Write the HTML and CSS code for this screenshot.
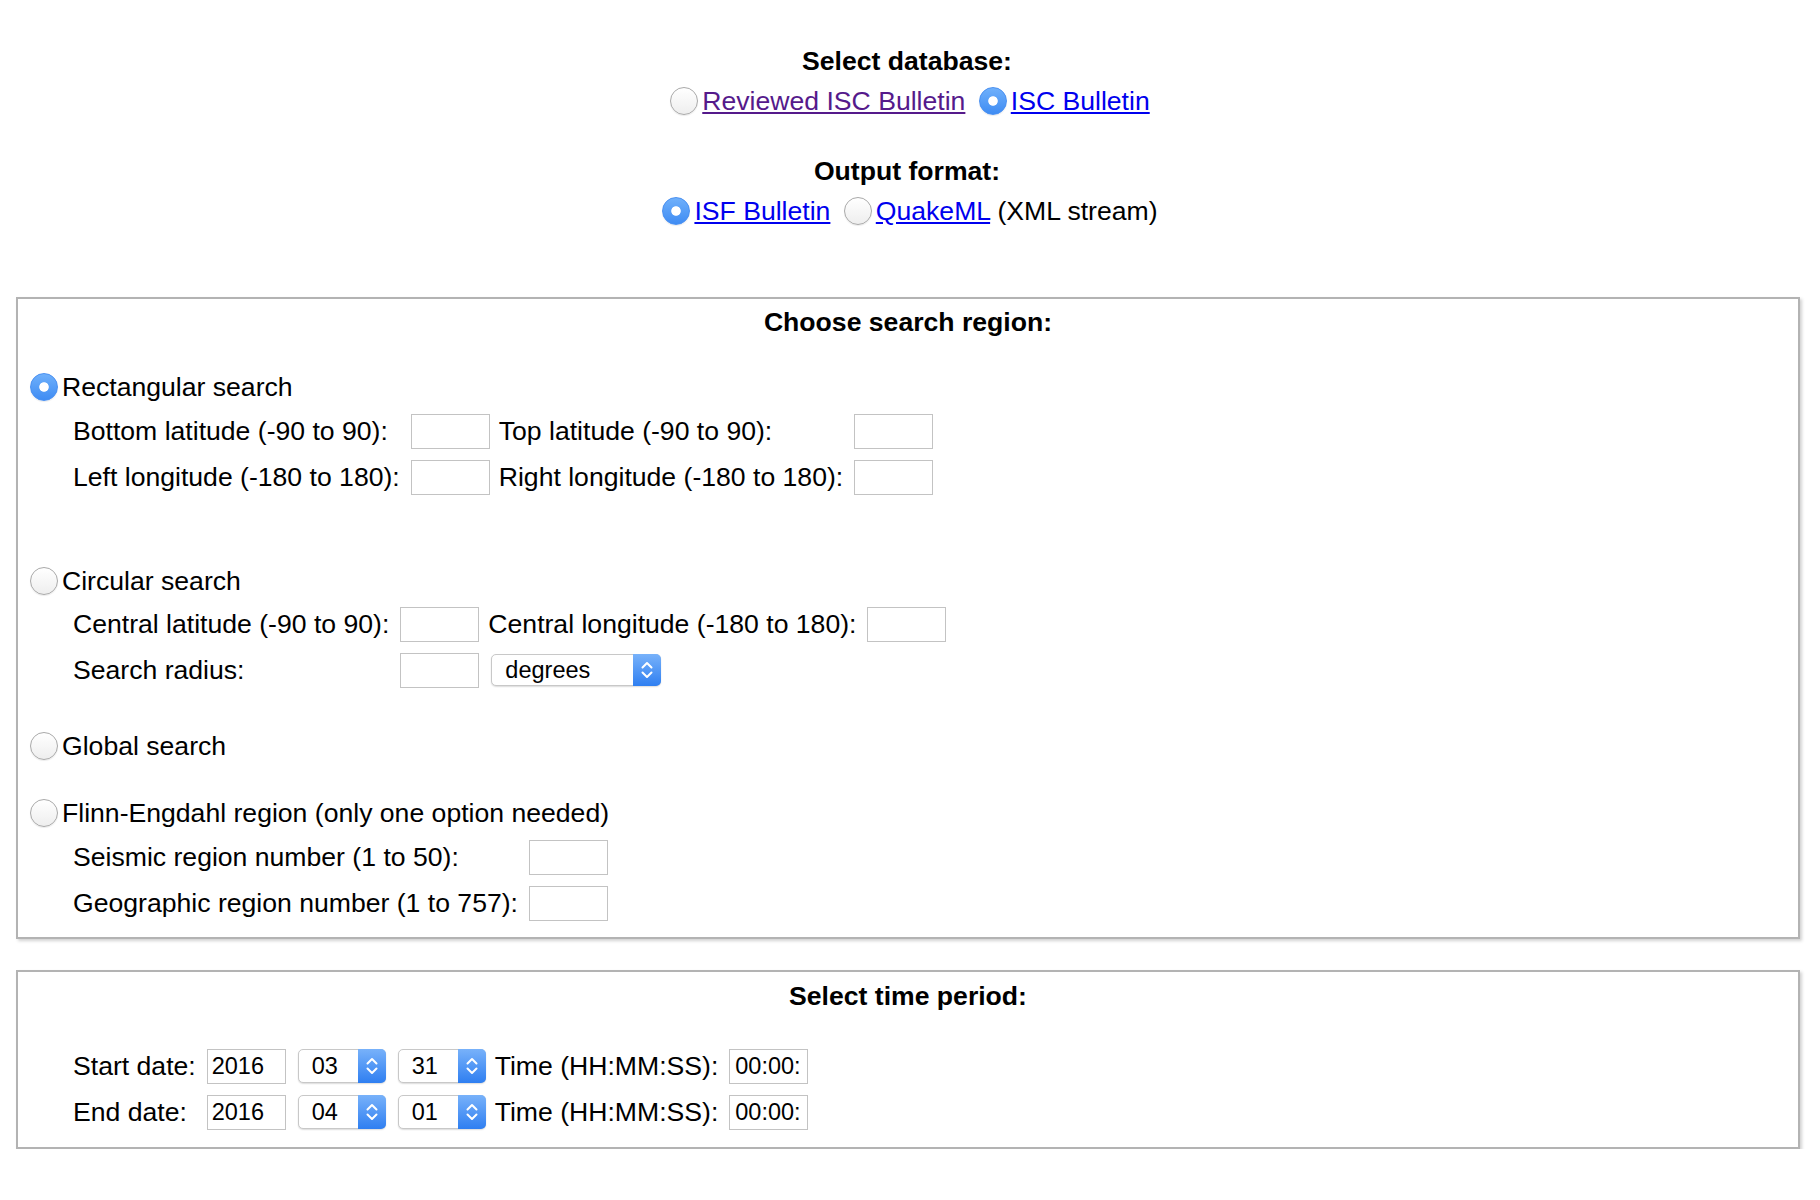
FILE: index.html
```html
<!DOCTYPE html>
<html lang="en">
<head>
<meta charset="utf-8">
<title>ISC Bulletin search</title>
<link rel="stylesheet" href="styles.css">
</head>
<body>
<div class="top">
  <div class="heading">Select database:</div>
  <div class="choices"><input type="radio" class="radio" name="db"><a href="#" class="link visited">Reviewed ISC Bulletin</a> <input type="radio" class="radio" name="db" checked><a href="#" class="link">ISC Bulletin</a></div>
  <div class="heading heading-gap">Output format:</div>
  <div class="choices"><input type="radio" class="radio" name="fmt" checked><a href="#" class="link">ISF Bulletin</a> <input type="radio" class="radio" name="fmt"><a href="#" class="link">QuakeML</a> (XML stream)</div>
</div>

<div class="box box-region">
  <div class="box-title">Choose search region:</div>

  <div class="opt opt-rect"><input type="radio" class="radio" name="region" checked>Rectangular search</div>
  <table class="grid grid-shift">
    <tr>
      <td class="lab">Bottom latitude (-90 to 90):</td>
      <td class="inp"><input type="text" class="field"></td>
      <td class="lab">Top latitude (-90 to 90):</td>
      <td class="inp"><input type="text" class="field"></td>
    </tr>
    <tr>
      <td class="lab">Left longitude (-180 to 180):</td>
      <td class="inp"><input type="text" class="field"></td>
      <td class="lab">Right longitude (-180 to 180):</td>
      <td class="inp"><input type="text" class="field"></td>
    </tr>
  </table>

  <div class="opt opt-circ"><input type="radio" class="radio" name="region">Circular search</div>
  <table class="grid">
    <tr>
      <td class="lab">Central latitude (-90 to 90):</td>
      <td class="inp"><input type="text" class="field"></td>
      <td class="lab">Central longitude (-180 to 180):</td>
      <td class="inp"><input type="text" class="field"></td>
    </tr>
    <tr>
      <td class="lab">Search radius:</td>
      <td class="inp"><input type="text" class="field"></td>
      <td class="inp" colspan="2">
        <span class="select select-wide"><select class="select-input"><option>degrees</option><option>km</option></select><span class="select-arrow"><svg viewBox="0 0 14 24" width="14" height="24"><path d="M2.5 9.5 L7 5 L11.5 9.5 M2.5 14.5 L7 19 L11.5 14.5" fill="none" stroke="#fff" stroke-width="2" stroke-linecap="round" stroke-linejoin="round"/></svg></span></span>
      </td>
    </tr>
  </table>

  <div class="opt opt-global"><input type="radio" class="radio" name="region">Global search</div>

  <div class="opt opt-flinn"><input type="radio" class="radio" name="region">Flinn-Engdahl region (only one option needed)</div>
  <table class="grid grid-shift">
    <tr>
      <td class="lab">Seismic region number (1 to 50):</td>
      <td class="inp"><input type="text" class="field"></td>
    </tr>
    <tr>
      <td class="lab">Geographic region number (1 to 757):</td>
      <td class="inp"><input type="text" class="field"></td>
    </tr>
  </table>
</div>

<div class="box box-time">
  <div class="box-title box-title-time">Select time period:</div>
  <table class="grid grid-time">
    <tr>
      <td class="lab">Start date:</td>
      <td class="inp"><input type="text" class="field" value="2016"></td>
      <td class="inp"><span class="select select-date"><select class="select-input"><option>03</option></select><span class="select-arrow"><svg viewBox="0 0 14 24" width="14" height="24"><path d="M2.5 9.5 L7 5 L11.5 9.5 M2.5 14.5 L7 19 L11.5 14.5" fill="none" stroke="#fff" stroke-width="2" stroke-linecap="round" stroke-linejoin="round"/></svg></span></span></td>
      <td class="inp"><span class="select select-date"><select class="select-input"><option>31</option></select><span class="select-arrow"><svg viewBox="0 0 14 24" width="14" height="24"><path d="M2.5 9.5 L7 5 L11.5 9.5 M2.5 14.5 L7 19 L11.5 14.5" fill="none" stroke="#fff" stroke-width="2" stroke-linecap="round" stroke-linejoin="round"/></svg></span></span></td>
      <td class="lab">Time (HH:MM:SS):</td>
      <td class="inp"><input type="text" class="field field-time" value="00:00:00"></td>
    </tr>
    <tr>
      <td class="lab">End date:</td>
      <td class="inp"><input type="text" class="field" value="2016"></td>
      <td class="inp"><span class="select select-date"><select class="select-input"><option>04</option></select><span class="select-arrow"><svg viewBox="0 0 14 24" width="14" height="24"><path d="M2.5 9.5 L7 5 L11.5 9.5 M2.5 14.5 L7 19 L11.5 14.5" fill="none" stroke="#fff" stroke-width="2" stroke-linecap="round" stroke-linejoin="round"/></svg></span></span></td>
      <td class="inp"><span class="select select-date"><select class="select-input"><option>01</option></select><span class="select-arrow"><svg viewBox="0 0 14 24" width="14" height="24"><path d="M2.5 9.5 L7 5 L11.5 9.5 M2.5 14.5 L7 19 L11.5 14.5" fill="none" stroke="#fff" stroke-width="2" stroke-linecap="round" stroke-linejoin="round"/></svg></span></span></td>
      <td class="lab">Time (HH:MM:SS):</td>
      <td class="inp"><input type="text" class="field field-time" value="00:00:00"></td>
    </tr>
  </table>
</div>
</body>
</html>
```

FILE: styles.css
```css
html, body {
  margin: 0;
  padding: 0;
  background: #fff;
}

body {
  font-family: "Liberation Sans", Arial, Helvetica, sans-serif;
  font-size: 26.6px;
  color: #000;
}

.top {
  margin: 0 22px 0 16px;
  padding-top: 41px;
  text-align: center;
}

.heading {
  height: 40px;
  line-height: 40px;
  font-weight: bold;
}

.heading-gap {
  margin-top: 30px;
}

.choices {
  height: 40px;
  line-height: 40px;
  white-space: nowrap;
}

.link {
  color: #0000ee;
  text-decoration: underline;
  text-underline-offset: 2px;
}

.visited {
  color: #551a8b;
}

.radio {
  -webkit-appearance: none;
  appearance: none;
  box-sizing: border-box;
  width: 28px;
  height: 28px;
  margin: 0 4px 0 6px;
  border-radius: 50%;
  border: 1px solid #a9a9a9;
  background: linear-gradient(#ffffff, #eeeeee);
  box-shadow: 0 1px 1px rgba(0, 0, 0, 0.08);
  vertical-align: middle;
  position: relative;
  top: -2px;
}

.radio:checked {
  border-color: #4a90f1;
  background:
    radial-gradient(circle at 50% 50%, #ffffff 0, #ffffff 4.3px, rgba(255, 255, 255, 0) 5.2px),
    linear-gradient(#6fb0fb, #3f8cf3);
}

.box {
  margin: 66px 20px 0 16px;
  border: 2px solid #b3b3b3;
  box-shadow: 2px 2px 3px rgba(0, 0, 0, 0.18);
  background: #fff;
}

.box-region {
  padding-bottom: 11px;
}

.box-time {
  margin-top: 31px;
  padding-bottom: 12px;
}

.box-title {
  margin-top: 3px;
  height: 40px;
  line-height: 40px;
  text-align: center;
  font-weight: bold;
}

.box-title-time {
  margin-top: 4px;
}

.opt {
  height: 40px;
  line-height: 40px;
  padding-left: 6px;
  white-space: nowrap;
}

.opt-rect {
  margin-top: 25px;
}

.opt-circ {
  margin-top: 61px;
}

.opt-global {
  margin-top: 33px;
}

.opt-flinn {
  margin-top: 27px;
}

.grid {
  margin-left: 55px;
  border-collapse: separate;
  border-spacing: 0;
}

.grid-shift {
  margin-top: 1px;
}

.grid-time {
  margin-top: 27px;
}

.grid td {
  height: 46px;
  padding: 0;
  vertical-align: middle;
  white-space: nowrap;
}

.grid td.lab {
  padding-right: 11px;
}

.grid td.inp {
  padding-right: 9px;
}

.field {
  box-sizing: border-box;
  width: 79px;
  height: 35px;
  margin: 0;
  padding: 0 4px;
  border: 1px solid #c3c3c3;
  font-family: "Liberation Sans", Arial, sans-serif;
  font-size: 23.5px;
  color: #000;
  background: #fff;
  vertical-align: middle;
  outline: none;
}

.field-time {
  padding: 0 8px 0 5px;
}

.select {
  position: relative;
  display: inline-block;
  margin-left: 3px;
  vertical-align: middle;
}

.select-input {
  -webkit-appearance: none;
  appearance: none;
  box-sizing: border-box;
  display: block;
  margin: 0;
  padding: 0 30px 0 13px;
  border: 1px solid #c8c8c8;
  border-radius: 5px;
  background: #fff;
  box-shadow: 0 1px 1.5px rgba(0, 0, 0, 0.14);
  font-family: "Liberation Sans", Arial, sans-serif;
  font-size: 23.5px;
  color: #000;
  outline: none;
}

.select-wide .select-input {
  width: 170px;
  height: 32px;
}

.select-date .select-input {
  width: 88px;
  height: 34px;
}

.select-arrow {
  position: absolute;
  top: 0;
  right: 0;
  bottom: 0;
  width: 28px;
  border-radius: 0 5px 5px 0;
  background: linear-gradient(#78b2fa, #2f7ff1);
  display: flex;
  align-items: center;
  justify-content: center;
  pointer-events: none;
}
```
